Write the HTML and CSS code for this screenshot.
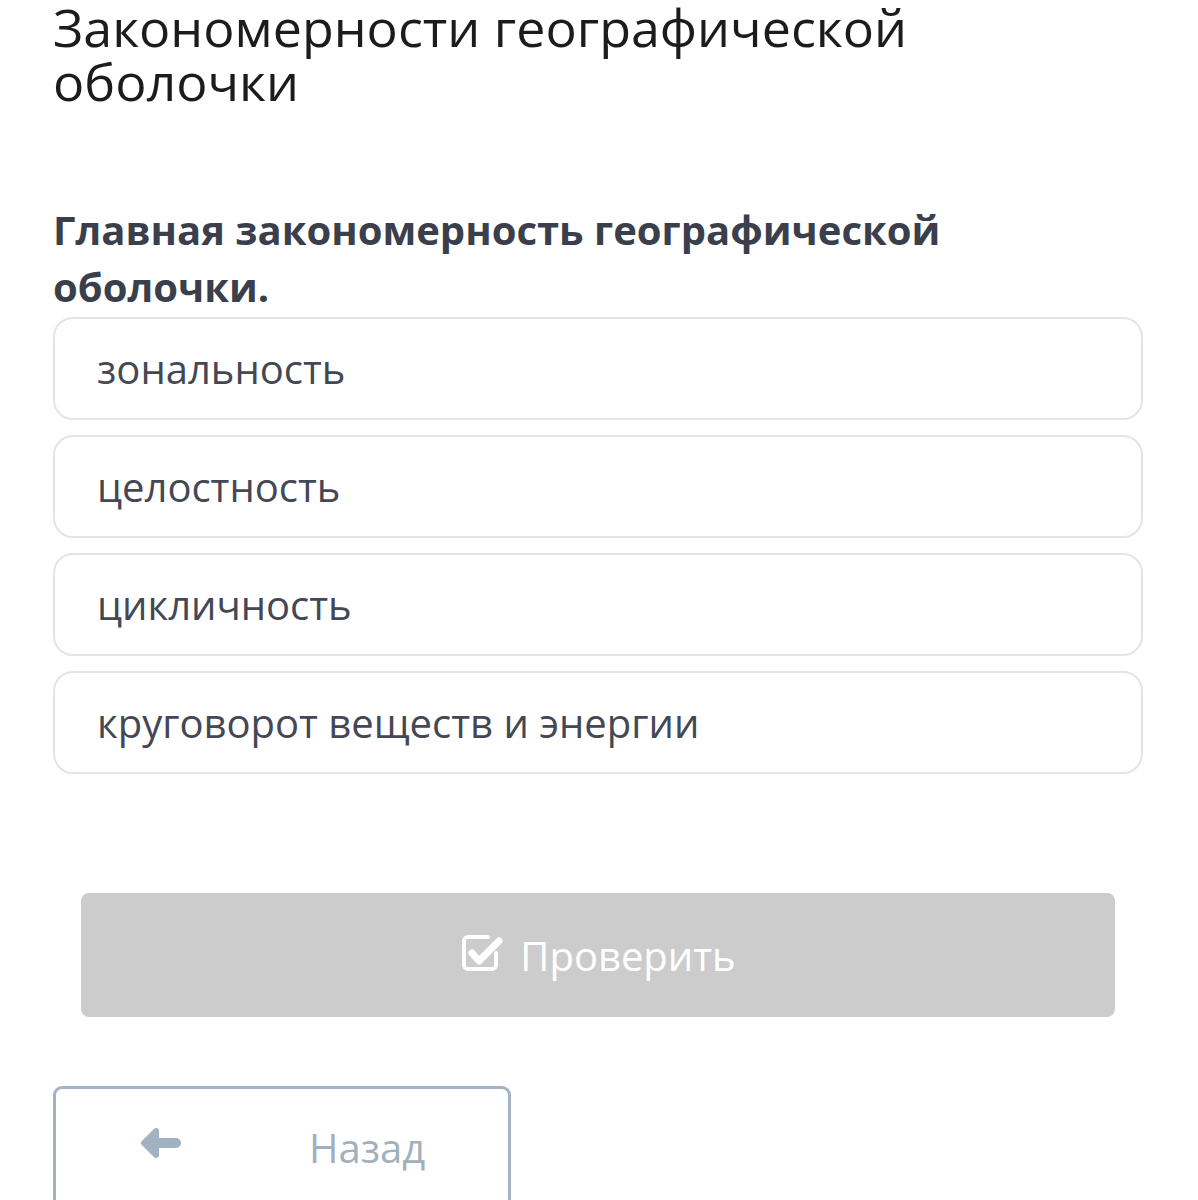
FILE: index.html
```html
<!DOCTYPE html>
<html lang="ru">
<head>
<meta charset="utf-8">
<link rel="stylesheet" href="styles.css">
</head>
<body>
<main class="page">
  <h1 class="title">Закономерности географической оболочки</h1>
  <h2 class="question">Главная закономерность географической оболочки.</h2>
  <div class="options">
    <div class="option">зональность</div>
    <div class="option">целостность</div>
    <div class="option">цикличность</div>
    <div class="option">круговорот веществ и энергии</div>
  </div>
  <div class="check-wrap">
    <button class="check-btn" type="button">
      <svg class="check-icon" viewBox="0 0 44 42" width="44" height="42" aria-hidden="true">
        <path d="M36 22 V34 a4 4 0 0 1 -4 4 H8 a4 4 0 0 1 -4 -4 V10 a4 4 0 0 1 4 -4 H28" fill="none" stroke="#ffffff" stroke-width="4" stroke-linecap="round" stroke-linejoin="round"/>
        <path d="M12 22 L19 30 L39 10" fill="none" stroke="#ffffff" stroke-width="7" stroke-linecap="round" stroke-linejoin="round"/>
      </svg>
      <span>Проверить</span>
    </button>
  </div>
  <div class="nav">
    <button class="back-btn" type="button">
      <svg class="back-icon" viewBox="0 0 42 32" width="42" height="32" aria-hidden="true">
        <path d="M16 4 L4 16 L16 28 Z" fill="#a3b2c1" stroke="#a3b2c1" stroke-width="6" stroke-linejoin="round"/>
        <path d="M14 16 H36" fill="none" stroke="#a3b2c1" stroke-width="10" stroke-linecap="round"/>
      </svg>
      <span>Назад</span>
    </button>
  </div>
</main>
</body>
</html>
```

FILE: styles.css
```css
html, body {
  margin: 0;
  padding: 0;
  background: #ffffff;
}

body {
  font-family: "Open Sans", "Noto Sans", sans-serif;
  overflow: hidden;
  height: 1200px;
}

.page {
  width: 1090px;
  padding: 0 0 0 53px;
}

.title {
  margin: 0;
  max-width: 980px;
  font-weight: 400;
  font-size: 52px;
  line-height: 54px;
  color: #1c1c1c;
}

.question {
  margin: 93px 0 2px;
  font-weight: 700;
  font-size: 40px;
  line-height: 57px;
  color: #3a3f4b;
}

.options {
  display: flex;
  flex-direction: column;
  gap: 15px;
}

.option {
  box-sizing: border-box;
  height: 103px;
  display: flex;
  align-items: center;
  padding: 0 42px;
  border: 2px solid #e3e3ea;
  border-radius: 20px;
  font-size: 40px;
  color: #434854;
}

.check-wrap {
  padding: 119px 28px 0;
}

.check-btn {
  width: 100%;
  height: 124px;
  border: none;
  border-radius: 8px;
  background: #cccccc;
  color: #ffffff;
  font-family: inherit;
  font-size: 40px;
  display: flex;
  align-items: center;
  justify-content: center;
  gap: 16px;
  padding: 0;
}

.check-icon {
  display: block;
  margin-top: -6px;
}

.nav {
  padding-top: 69px;
}

.back-btn {
  box-sizing: border-box;
  width: 458px;
  height: 140px;
  border: 3px solid #a3b3c3;
  border-radius: 9px;
  background: #ffffff;
  color: #a2b0be;
  font-family: inherit;
  font-size: 40px;
  display: flex;
  align-items: flex-start;
  padding: 31px 0 0 84px;
}

.back-icon {
  display: block;
  margin-top: 7px;
}

.back-btn span {
  margin-left: 127px;
}
```
